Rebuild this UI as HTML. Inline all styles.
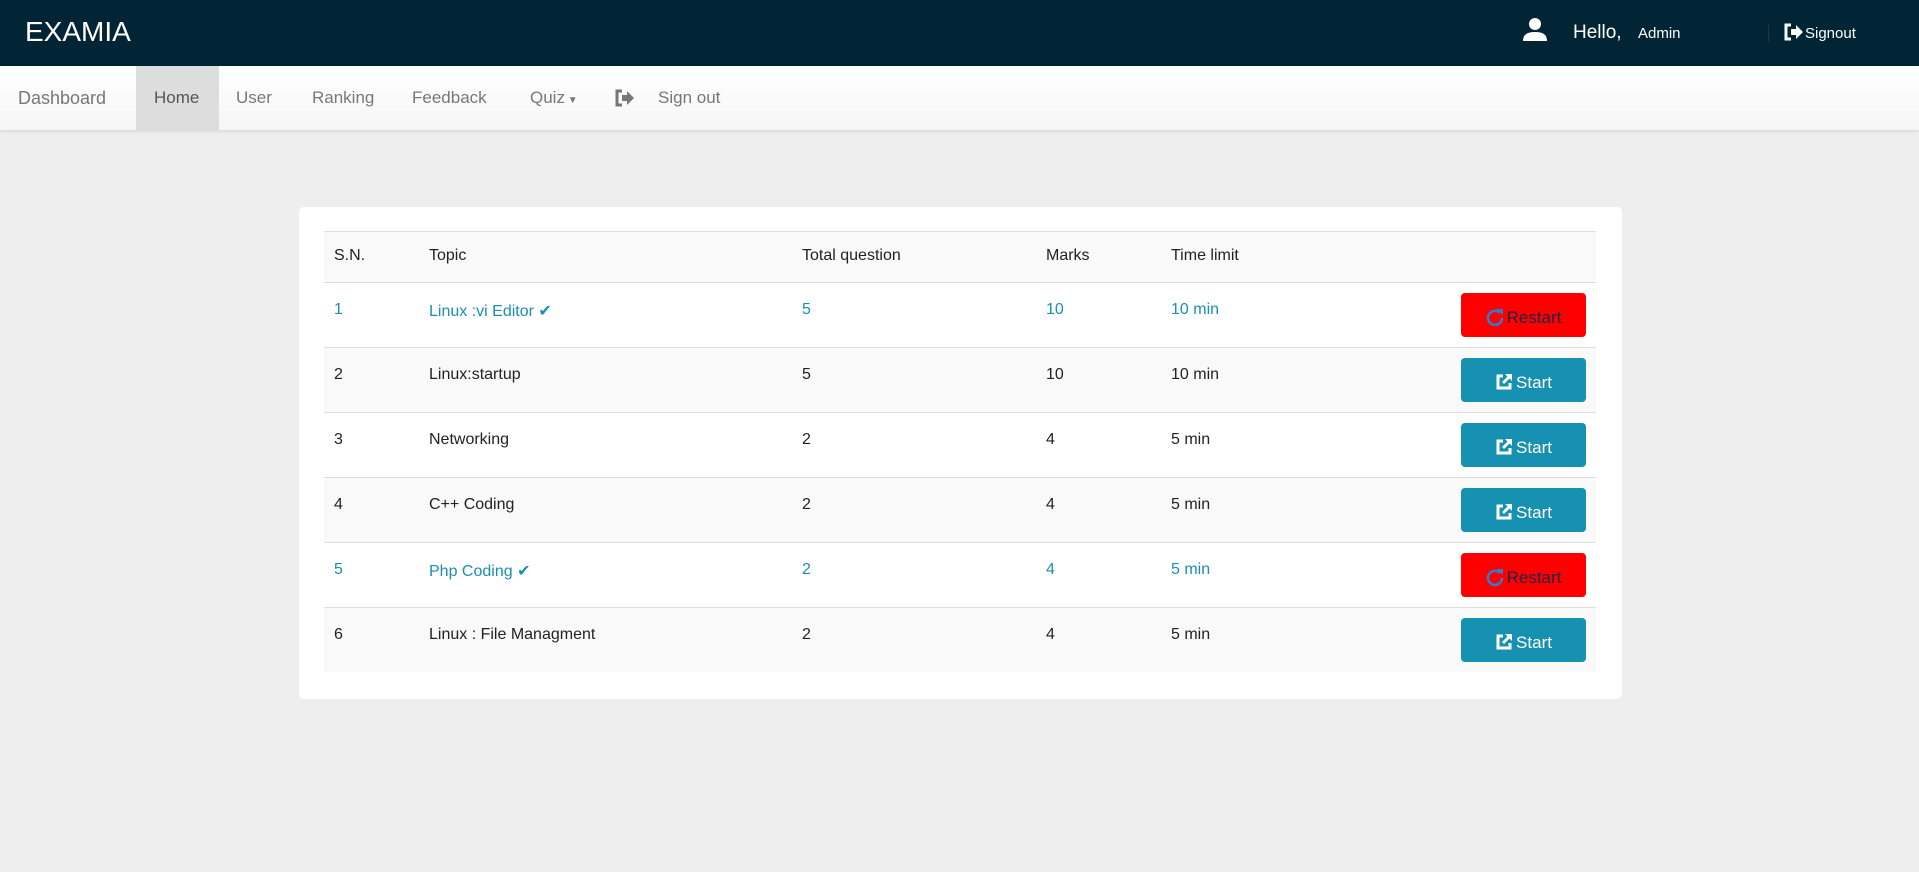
<!DOCTYPE html>
<html><head><meta charset="utf-8"><style>
*{margin:0;padding:0;box-sizing:border-box}
body{width:1919px;height:872px;background:#eeeeee;font-family:"Liberation Sans",sans-serif;position:relative;overflow:hidden;color:#222}
.top{position:absolute;left:0;top:0;width:1919px;height:66px;background:#012535;color:#fff}
.abs{position:absolute;white-space:nowrap}
.nav{position:absolute;left:0;top:66px;width:1919px;height:64px;background:linear-gradient(#fff,#f6f6f6);box-shadow:0 1px 4px rgba(0,0,0,.12);color:#777;font-size:17px}
.card{position:absolute;left:299px;top:207px;width:1323px;height:492px;background:#fff;border-radius:5px}
.row{position:absolute;left:25px;width:1272px;height:65px;border-top:1px solid #ddd;font-size:16px}
.row span{position:absolute;top:18px}
.btn{position:absolute;left:1137px;top:10px;width:125px;height:44px;border-radius:4px;color:#fff;font-size:17px;text-align:center;padding-top:15px}
.btn svg{vertical-align:-3px;margin-right:3px}
.blue{color:#1a8fb1}
</style></head><body>
<div class="top">
 <div class="abs" style="left:25px;top:16px;font-size:28px">EXAMIA</div>
 <svg class="abs" style="left:1523px;top:17px" width="24" height="24" viewBox="0 0 24 24"><circle cx="12" cy="7" r="6" fill="#fff"/><path d="M0 24c0-7 5-9 12-9s12 2 12 9z" fill="#fff"/></svg>
 <div class="abs" style="left:1573px;top:22px;font-size:19px">Hello,</div>
 <div class="abs" style="left:1638px;top:25px;font-size:15px">Admin</div>
 <div class="abs" style="left:1768px;top:25px;width:1px;height:17px;background:#333"></div>
 <svg class="abs" style="left:1783px;top:23px" width="20" height="18" viewBox="0 0 20 18"><path d="M8 2H3v14h5" stroke="#fff" stroke-width="3" fill="none"/><path d="M8 6h5V2l7 7-7 7v-4H8z" fill="#fff"/></svg>
 <div class="abs" style="left:1805px;top:25px;font-size:15px">Signout</div>
</div>
<div class="nav">
 <div class="abs" style="left:18px;top:22px;font-size:18px">Dashboard</div>
 <div class="abs" style="left:136px;top:0;width:83px;height:64px;background:#ddd"></div>
 <div class="abs" style="left:154px;top:22px;color:#555">Home</div>
 <div class="abs" style="left:236px;top:22px">User</div>
 <div class="abs" style="left:312px;top:22px">Ranking</div>
 <div class="abs" style="left:412px;top:22px">Feedback</div>
 <div class="abs" style="left:530px;top:22px">Quiz<span style="font-size:10px"> ▼</span></div>
 <svg class="abs" style="left:614px;top:23px" width="20" height="18" viewBox="0 0 20 18"><path d="M8 2H3v14h5" stroke="#777" stroke-width="3" fill="none"/><path d="M8 6h5V2l7 7-7 7v-4H8z" fill="#777"/></svg>
 <div class="abs" style="left:658px;top:22px">Sign out</div>
</div>
<svg width="0" height="0" style="position:absolute"><defs>
<symbol id="ext" viewBox="0 0 18 18"><path d="M8 3H3v12h12v-5" stroke="#fff" stroke-width="3" fill="none"/><path d="M10 1h7v7l-2.5-2.5L9 11 7 9l5.5-5.5z" fill="#fff"/></symbol>
<symbol id="rf" viewBox="0 0 18 18"><path d="M14 5A7 7 0 1 0 16 10" stroke="#2a7fd0" stroke-width="2.5" fill="none"/><path d="M11 1h6v6z" fill="#2a7fd0"/></symbol>
</defs></svg>
<div class="card">
 <div class="row" style="top:24px;height:51px;background:#f9f9f9;border-top:1px solid #ddd"><span style="left:10px;top:15px">S.N.</span><span style="left:105px;top:15px">Topic</span><span style="left:478px;top:15px">Total question</span><span style="left:722px;top:15px">Marks</span><span style="left:847px;top:15px">Time limit</span></div>

 <div class="row blue" style="top:75px"><span style="left:10px">1</span><span style="left:105px">Linux :vi Editor ✔</span><span style="left:478px">5</span><span style="left:722px">10</span><span style="left:847px">10 min</span><div class="btn" style="background:#f00;color:#1a2a4a"><svg width="18" height="18"><use href="#rf"/></svg>Restart</div></div>
 <div class="row" style="top:140px;background:#f9f9f9"><span style="left:10px">2</span><span style="left:105px">Linux:startup</span><span style="left:478px">5</span><span style="left:722px">10</span><span style="left:847px">10 min</span><div class="btn" style="background:#1791b1"><svg width="18" height="18"><use href="#ext"/></svg>Start</div></div>
 <div class="row" style="top:205px"><span style="left:10px">3</span><span style="left:105px">Networking</span><span style="left:478px">2</span><span style="left:722px">4</span><span style="left:847px">5 min</span><div class="btn" style="background:#1791b1"><svg width="18" height="18"><use href="#ext"/></svg>Start</div></div>
 <div class="row" style="top:270px;background:#f9f9f9"><span style="left:10px">4</span><span style="left:105px">C++ Coding</span><span style="left:478px">2</span><span style="left:722px">4</span><span style="left:847px">5 min</span><div class="btn" style="background:#1791b1"><svg width="18" height="18"><use href="#ext"/></svg>Start</div></div>
 <div class="row blue" style="top:335px"><span style="left:10px">5</span><span style="left:105px">Php Coding ✔</span><span style="left:478px">2</span><span style="left:722px">4</span><span style="left:847px">5 min</span><div class="btn" style="background:#f00;color:#1a2a4a"><svg width="18" height="18"><use href="#rf"/></svg>Restart</div></div>
 <div class="row" style="top:400px;background:#f9f9f9"><span style="left:10px">6</span><span style="left:105px">Linux : File Managment</span><span style="left:478px">2</span><span style="left:722px">4</span><span style="left:847px">5 min</span><div class="btn" style="background:#1791b1"><svg width="18" height="18"><use href="#ext"/></svg>Start</div></div>
</div>
</body></html>
